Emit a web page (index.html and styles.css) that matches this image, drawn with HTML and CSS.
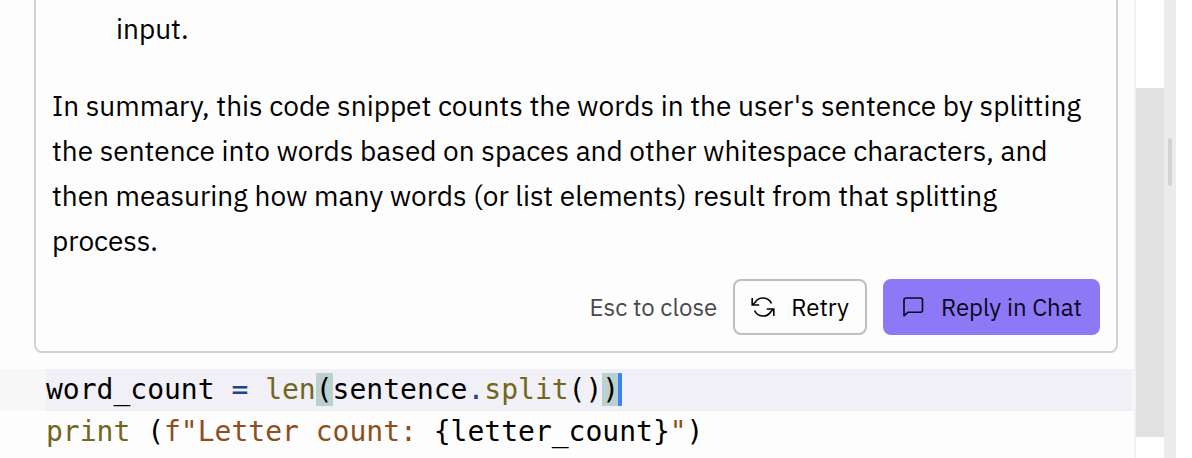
FILE: index.html
```html
<!DOCTYPE html>
<html lang="en">
<head>
    <meta charset="UTF-8">
    <meta name="viewport" content="width=device-width, initial-scale=1.0">
    <title>Code Editor</title>
    <link rel="stylesheet" href="styles.css">
</head>
<body>
    <div class="workspace">
        <main class="editor">
            <section class="panel">
                <p class="list-text">input.</p>
                <p class="summary">In summary, this code snippet counts the words in the user's sentence by splitting the sentence into words based on spaces and other whitespace characters, and then measuring how many words (or list elements) result from that splitting process.</p>
                <div class="actions">
                    <span class="hint">Esc to close</span>
                    <button type="button" class="btn btn-retry">
                        <svg class="icon" viewBox="0 0 24 24" fill="none" stroke="currentColor" stroke-width="1.6" aria-hidden="true">
                            <path d="M20.500 8.500A9.300 9.300 0 0 0 4 7.500L1.200 10M1.200 3V10H8.200"/>
                            <path d="M3.500 15.500A9.300 9.300 0 0 0 20 16.500L22.800 14M22.800 21V14H15.800"/>
                        </svg>
                        Retry
                    </button>
                    <button type="button" class="btn btn-reply">
                        <svg class="icon" viewBox="0 0 24 24" fill="none" stroke="currentColor" stroke-width="1.6" stroke-linejoin="round" aria-hidden="true">
                            <path d="M3 20.800V5Q3 3 5 3H19.500Q21.500 3 21.500 5V15.300Q21.500 17.300 19.500 17.300H6.800Z"/>
                        </svg>
                        Reply in Chat
                    </button>
                </div>
            </section>
            <div class="code">
                <div class="line active"><code>word_count <span class="op">=</span> <span class="fn">len</span><span class="match">(</span>sentence<span class="op">.</span><span class="fn">split</span>()<span class="match">)</span><span class="cursor"></span></code></div>
                <div class="line"><code><span class="fn">print</span> (<span class="str">f"Letter count: </span>{letter_count}<span class="str">"</span>)</code></div>
            </div>
        </main>
        <div class="scrollbar"><div class="thumb"></div></div>
        <div class="divider"><div class="handle"></div></div>
        <aside class="side"></aside>
    </div>
</body>
</html>
```
FILE: styles.css
```css
* { box-sizing: border-box; }
body { margin: 0; background-color: #fdfdfd; color: #000; font-family: "IBM Plex Sans", Roboto, sans-serif; }
p { margin: 0; }

.workspace { display: flex; height: 100vh; overflow: hidden; }
.editor { flex: 1; min-width: 0; }

/* explanation panel */
.panel { margin: 0 16px 0 34px; padding: 6px 16px 16px; border: 2px solid #d0d1d2; border-top: none; border-radius: 0 0 8px 8px; font-size: 28px; line-height: 45px; }
.list-text { margin-bottom: 32px; padding-left: 64px; }
.actions { display: flex; justify-content: flex-end; align-items: center; gap: 16px; margin-top: 16px; }
.hint { color: #48484b; font-size: 24px; }
.btn { display: flex; align-items: center; gap: 16px; height: 56px; padding: 0 16px; border: 2px solid #bfbfbf; border-radius: 8px; background-color: #fdfdfd; color: #000; font-family: inherit; font-size: 24px; cursor: pointer; }
.btn-reply { border-color: #8d79f6; background-color: #8d79f6; color: #0c0620; }
.icon { width: 24px; height: 24px; }

/* code lines */
.code { margin-top: 16px; }
.line { height: 42px; padding-left: 46px; line-height: 42px; white-space: pre; }
.line code { display: block; font-family: "DejaVu Sans Mono", monospace; font-size: 28px; }
.active { background-color: #f7f7f7; }
.active code { margin-right: 2px; background-color: #f1f0f6; }
.op { color: #1f4488; }
.fn { color: #706720; }
.str { color: #8b4f20; }
.match { background-color: #bbd0cf; }
.cursor { display: inline-block; width: 4px; height: 33px; border-radius: 1px; margin-left: -1px; background-color: #3b82f6; vertical-align: text-bottom; }

.scrollbar { width: 30px; padding-top: 88px; border-left: 2px solid #f1f2f3; background-color: #fefefe; }
.thumb { height: 349px; background-color: #e1e1e1; }
.divider { width: 12px; padding: 138px 4px 0; background-color: #ebeded; }
.handle { height: 48px; border-radius: 2px; background-color: #d2d4d4; }
.side { width: 16px; background-color: #fefefe; }
```
